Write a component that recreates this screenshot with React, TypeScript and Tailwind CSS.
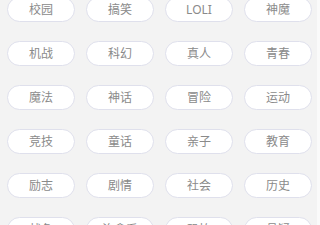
import React from 'react';

const tags: string[] = [
  '校园', '搞笑', 'LOLI', '神魔',
  '机战', '科幻', '真人', '青春',
  '魔法', '神话', '冒险', '运动',
  '竞技', '童话', '亲子', '教育',
  '励志', '剧情', '社会', '历史',
  '战争', '治愈系', '恐怖', '悬疑',
];

function TagPill({ label }: { label: string }) {
  return (
    <div className="flex h-[25px] w-[68px] items-center justify-center rounded-full border border-[#dfe0ec] bg-white text-[12px] text-[#8a8a8a]">
      {label}
    </div>
  );
}

export default function App() {
  return (
    <div
      className="flex h-[225px] w-[320px] overflow-hidden bg-[#f3f3f3]"
      style={{ fontFamily: '"Noto Sans", "Noto Sans CJK SC", sans-serif' }}
    >
      <div className="w-[317px]">
        <div className="-mt-[3px] grid grid-cols-[repeat(4,68px)] gap-x-[11px] gap-y-[19px] pl-[7px]">
          {tags.map((tag) => (
            <TagPill key={tag} label={tag} />
          ))}
        </div>
      </div>
      <div className="w-[3px] bg-[#fafafa]" />
    </div>
  );
}
